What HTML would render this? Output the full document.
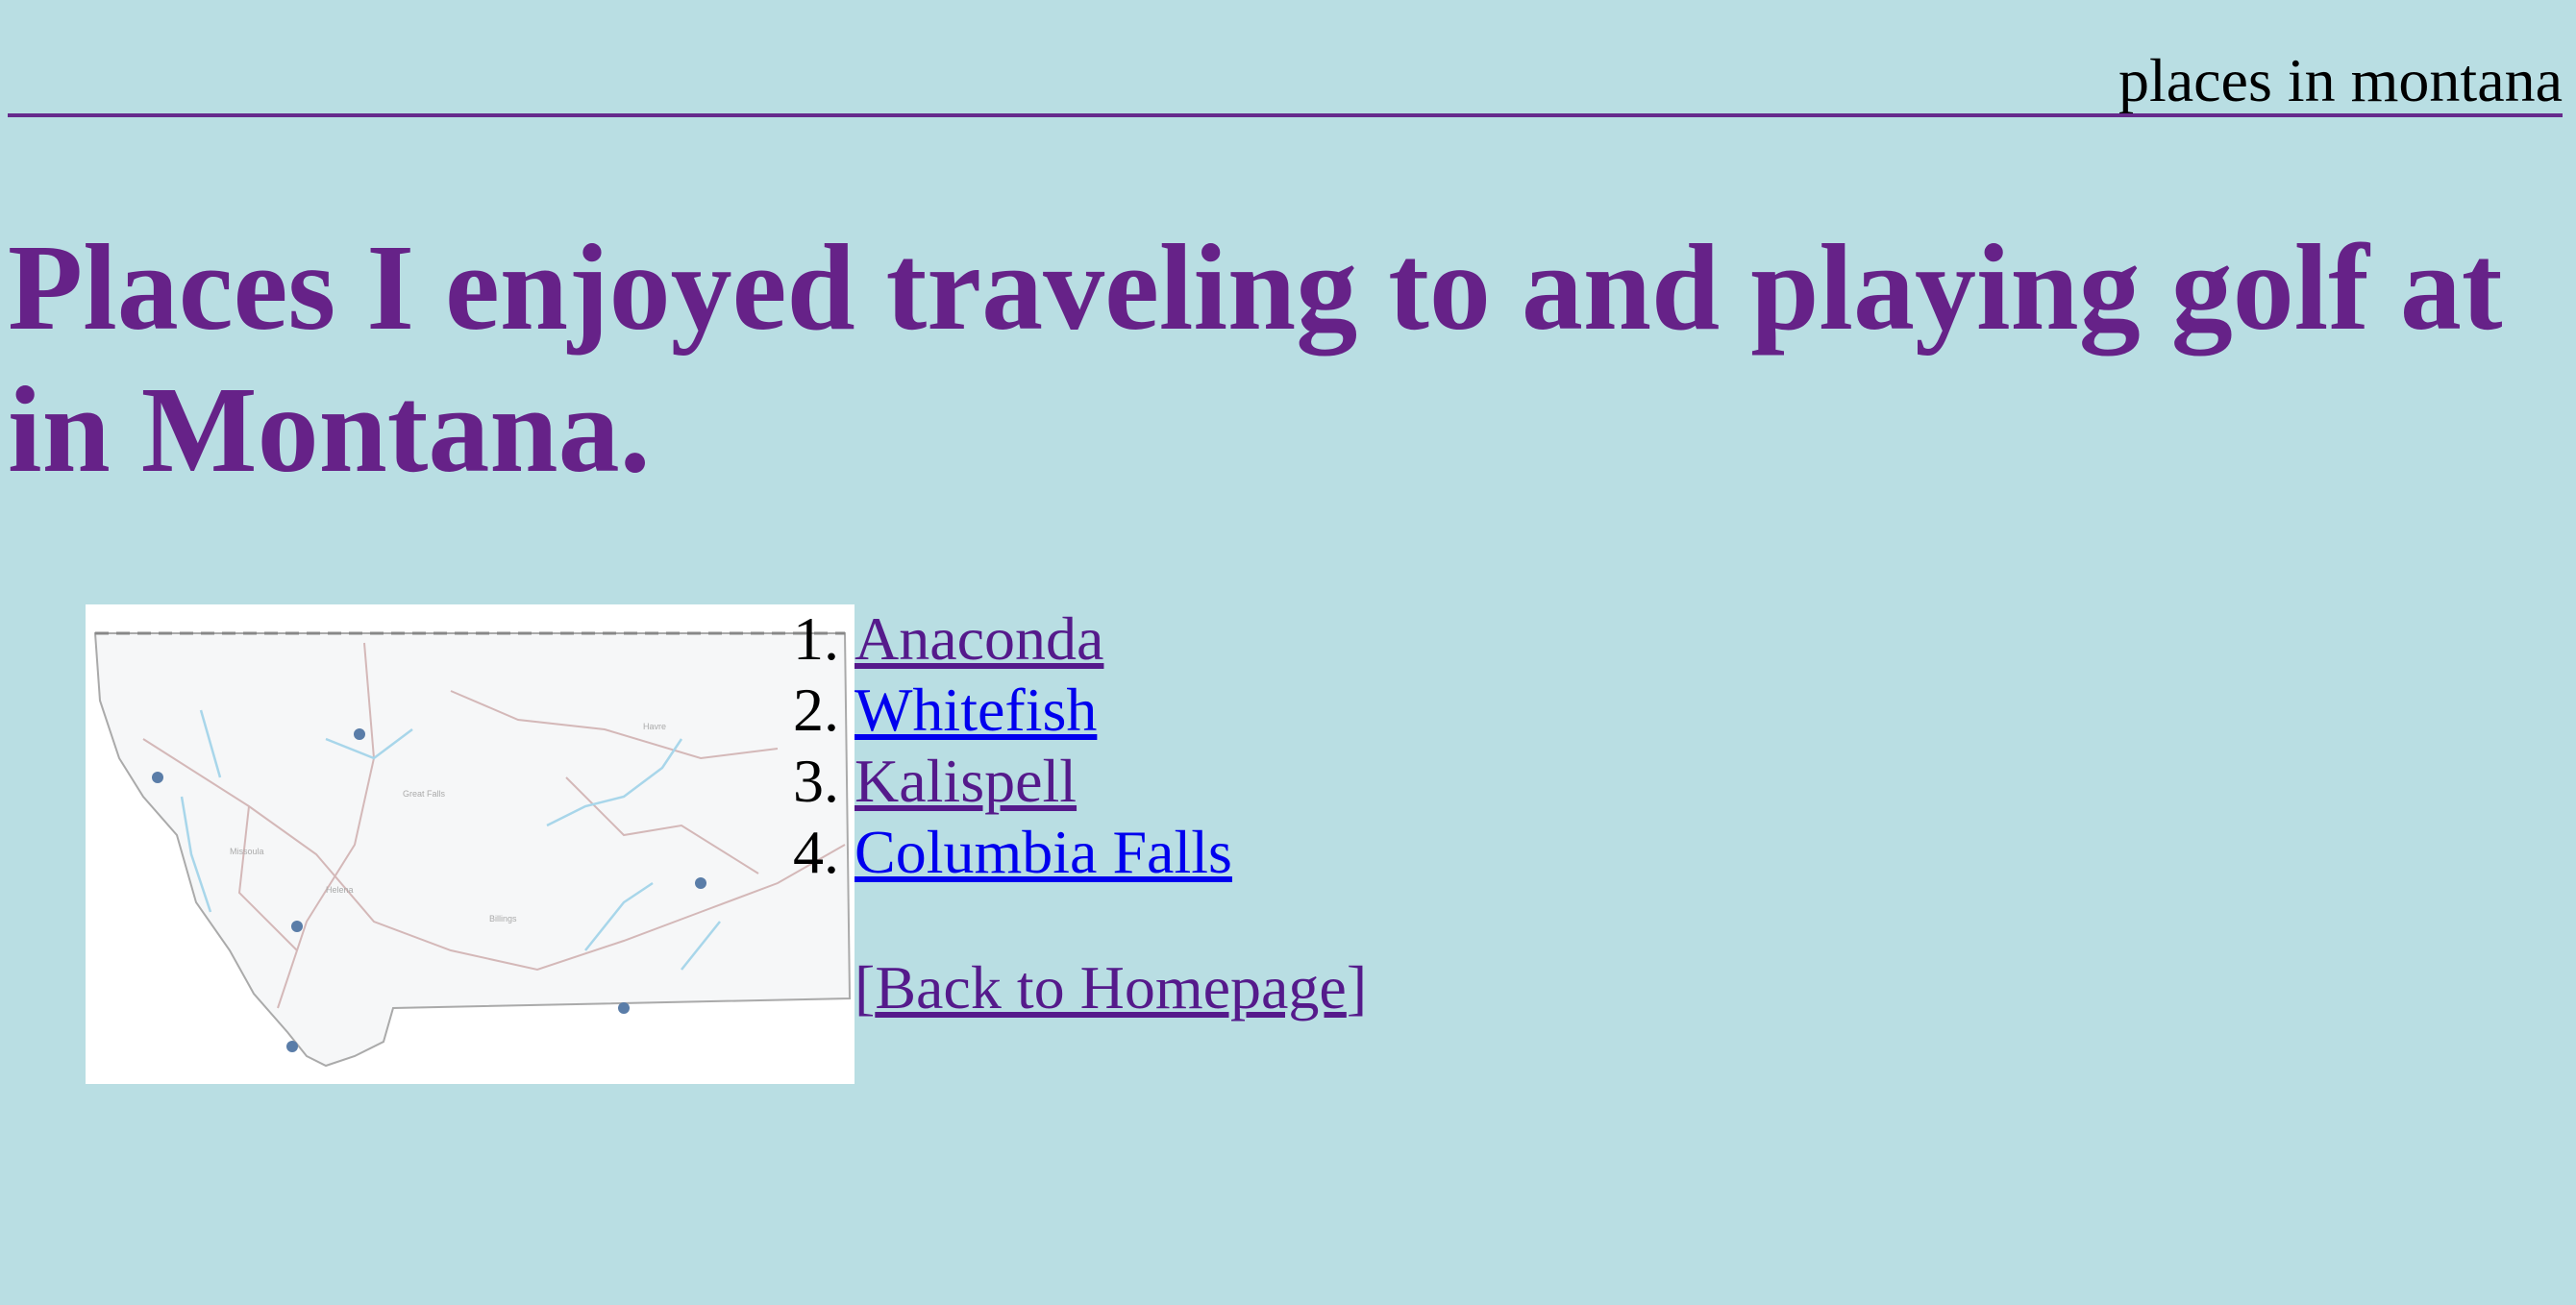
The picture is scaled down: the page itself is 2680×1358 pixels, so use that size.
<!DOCTYPE html>
<html><head><meta charset="utf-8">
<style>
html,body{margin:0;padding:0;}
body{width:2680px;height:1358px;background:#b9dee3;position:relative;overflow:hidden;font-family:"Liberation Serif",serif;}
.top{position:absolute;right:14px;top:52px;font-size:64px;line-height:64px;color:#000;white-space:nowrap;}
.hr{position:absolute;left:8px;width:2658px;top:118px;height:4px;background:#662a8c;}
h1{position:absolute;left:8px;top:225px;margin:0;font-size:128px;line-height:148px;font-weight:bold;color:#662288;width:2640px;}
.map{position:absolute;left:89px;top:629px;width:800px;height:499px;background:#fff;}
ol{position:absolute;left:889px;top:628px;margin:0;padding:0;font-size:64px;line-height:74px;}
ol li{white-space:nowrap;}
a{text-decoration:underline;}
.v{color:#551a8b;}
.u{color:#0000ee;}
.back{position:absolute;left:889px;top:991px;font-size:64px;line-height:74px;color:#551a8b;white-space:nowrap;}
</style></head><body>
<div class="top">places in montana</div>
<div class="hr"></div>
<h1>Places I enjoyed traveling to and playing golf at in Montana.</h1>
<div class="map">
<svg width="800" height="499" viewBox="0 0 800 499">
<rect width="800" height="499" fill="#fff"/>
<path d="M10 30 L790 30 L795 410 L320 420 L310 455 L280 470 L250 480 L230 470 L210 445 L175 405 L150 360 L115 310 L95 240 L60 200 L35 160 L15 100 Z" fill="#f6f7f8" stroke="#aaa" stroke-width="2"/>
<path d="M10 30 L790 30" stroke="#888" stroke-width="3" stroke-dasharray="14 8"/>
<g stroke="#d4b8b8" stroke-width="2" fill="none">
<path d="M60 140 L170 210 L240 260 L300 330 L380 360 L470 380 L560 350 L640 320 L720 290 L790 250"/>
<path d="M290 40 L300 160 L280 250 L230 330 L200 420"/>
<path d="M170 210 L160 300 L220 360"/>
<path d="M500 180 L560 240 L620 230 L700 280"/>
<path d="M380 90 L450 120 L540 130 L640 160 L720 150"/>
</g>
<g stroke="#a8d6ea" stroke-width="2.5" fill="none">
<path d="M480 230 L520 210 L560 200 L600 170 L620 140"/>
<path d="M250 140 L300 160 L340 130"/>
<path d="M100 200 L110 260 L130 320"/>
<path d="M520 360 L560 310 L590 290"/>
<path d="M620 380 L660 330"/>
<path d="M120 110 L140 180"/>
</g>
<g fill="#5a7da8"><circle cx="285" cy="135" r="6"/><circle cx="75" cy="180" r="6"/><circle cx="220" cy="335" r="6"/><circle cx="640" cy="290" r="6"/><circle cx="560" cy="420" r="6"/><circle cx="215" cy="460" r="6"/></g>
<g fill="#aaa" font-size="9" font-family="Liberation Sans,sans-serif"><text x="330" y="200">Great Falls</text><text x="420" y="330">Billings</text><text x="150" y="260">Missoula</text><text x="250" y="300">Helena</text><text x="580" y="130">Havre</text></g>
</svg>
</div>
<ol>
<li><a class="v" href="#">Anaconda</a></li>
<li><a class="u" href="#">Whitefish</a></li>
<li><a class="v" href="#">Kalispell</a></li>
<li><a class="u" href="#">Columbia Falls</a></li>
</ol>
<div class="back">[<a class="v" href="#">Back to Homepage</a>]</div>
</body></html>
